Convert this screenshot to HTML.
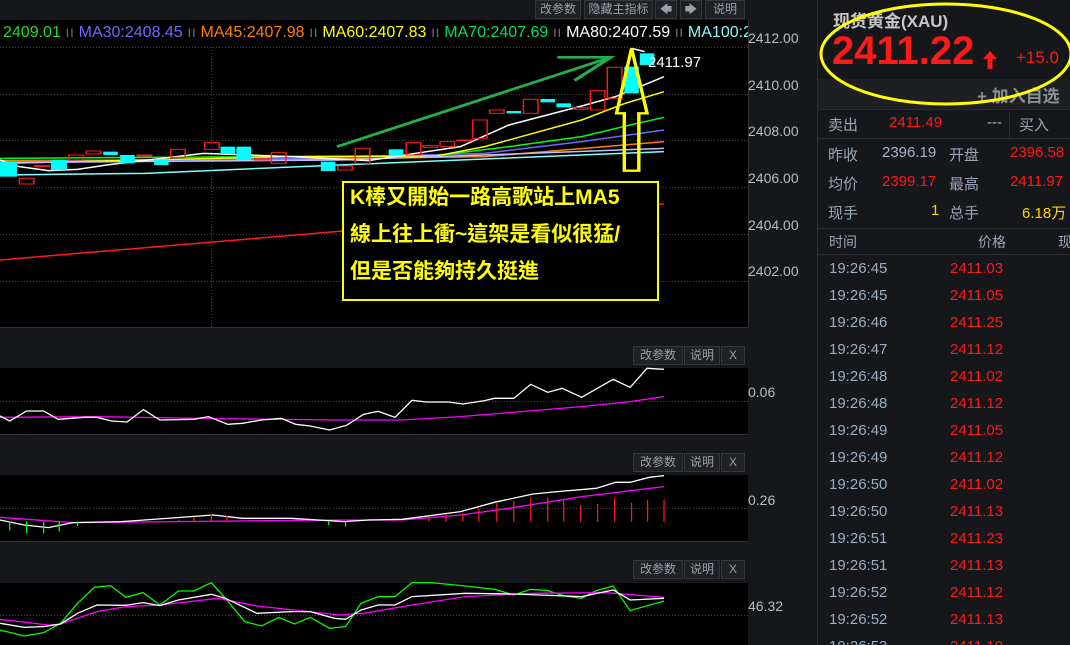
<!DOCTYPE html>
<html style="height:645px;overflow:hidden"><head><meta charset="utf-8"><style>
*{margin:0;padding:0;box-sizing:border-box}
body{width:1070px;height:645px;background:#16171b;overflow:hidden;position:relative;font-family:"Liberation Sans","Noto Sans CJK SC",sans-serif}
.a{position:absolute;white-space:nowrap}
.btn{position:absolute;background:#1f2125;border:1px solid #33363b;color:#9aa0a8;font-size:12px;text-align:center;line-height:17px;height:19px}
.ax{position:absolute;left:748px;font-size:14px;color:#b8bcc2}
.r{color:#ff1a1a}
.g{color:#a8b6c8}
.lb{color:#9aa6b6;font-size:15px}
</style></head><body>
<div class="a" style="left:0;top:20px;width:748px;height:308px;background:#000;border-bottom:1px solid #333"></div>
<div class="a" style="left:0;top:368px;width:748px;height:67px;background:#000;border-bottom:1px solid #333"></div>
<div class="a" style="left:0;top:475px;width:748px;height:67px;background:#000;border-bottom:1px solid #333"></div>
<div class="a" style="left:0;top:583px;width:748px;height:62px;background:#000"></div>
<div class="a" style="left:748px;top:20px;width:1px;height:308px;background:#333"></div>
<svg class="a" style="left:0;top:0" width="748" height="645">
<g stroke="#444" stroke-dasharray="1,2" stroke-width="1">
<line x1="0" y1="47.5" x2="748" y2="47.5"/><line x1="0" y1="94.5" x2="748" y2="94.5"/><line x1="0" y1="140.5" x2="748" y2="140.5"/><line x1="0" y1="187.5" x2="748" y2="187.5"/><line x1="0" y1="234.5" x2="748" y2="234.5"/><line x1="0" y1="281.5" x2="748" y2="281.5"/>
<line x1="211.5" y1="47" x2="211.5" y2="328"/>
<line x1="0" y1="401.5" x2="748" y2="401.5"/><line x1="0" y1="508.5" x2="748" y2="508.5"/><line x1="0" y1="615.5" x2="748" y2="615.5"/>
</g>
<g transform="scale(0.4847,0.3333)" fill="none" stroke-width="1.5">
<polyline vector-effect="non-scaling-stroke" stroke="#ff1a1a" points="0,780 1370,612"/>
<polyline vector-effect="non-scaling-stroke" stroke="#7fffff" points="0,525 300,520 700,495 1370,455"/>
<polyline vector-effect="non-scaling-stroke" stroke="#ff8000" points="0,482 600,478 1000,470 1370,425"/>
<polyline vector-effect="non-scaling-stroke" stroke="#6a6aff" points="0,486 600,476 1000,460 1200,425 1370,390"/>
<polyline vector-effect="non-scaling-stroke" stroke="#00ff00" points="0,475 900,467 1050,440 1200,410 1300,375 1370,352"/>
<polyline vector-effect="non-scaling-stroke" stroke="#ffff00" points="0,490 600,470 900,468 1000,440 1100,400 1200,360 1290,310 1370,275"/>
<polyline vector-effect="non-scaling-stroke" stroke="#c0c0ff" points="0,488 700,480 1000,465 1370,445"/>
<polyline vector-effect="non-scaling-stroke" stroke="#fff" points="0,480 40,500 100,512 160,508 220,495 420,460 600,470 760,482 830,466 950,440 1050,375 1200,318 1270,290 1370,230"/>
<polyline vector-effect="non-scaling-stroke" stroke="#fff" points="1303,145 1330,155"/>
<g fill="#00ffff">
<rect x="0" y="485" width="35" height="45"/><rect x="105" y="480" width="33" height="30"/><rect x="213" y="455" width="30" height="10"/><rect x="248" y="465" width="30" height="25"/><rect x="318" y="478" width="30" height="17"/><rect x="455" y="440" width="30" height="22"/><rect x="488" y="440" width="30" height="40"/><rect x="662" y="485" width="30" height="28"/><rect x="802" y="448" width="30" height="17"/><rect x="1045" y="333" width="30" height="7"/><rect x="1115" y="297" width="30" height="10"/><rect x="1148" y="310" width="30" height="12"/><rect x="1288" y="200" width="30" height="80"/><rect x="1320" y="160" width="30" height="35"/>
</g>
<g stroke="#ff1a1a" fill="none" stroke-width="3">
<rect x="40" y="535" width="30" height="17"/><rect x="72" y="497" width="30" height="3"/><rect x="142" y="465" width="30" height="15"/><rect x="178" y="453" width="30" height="9"/><rect x="283" y="465" width="30" height="3"/><rect x="352" y="448" width="30" height="24"/><rect x="422" y="428" width="30" height="20"/><rect x="525" y="475" width="30" height="5"/><rect x="560" y="458" width="30" height="32"/><rect x="697" y="498" width="30" height="12"/><rect x="733" y="445" width="30" height="45"/><rect x="838" y="428" width="30" height="37"/><rect x="873" y="437" width="30" height="5"/><rect x="908" y="425" width="30" height="15"/><rect x="943" y="420" width="30" height="2"/><rect x="975" y="360" width="30" height="55"/><rect x="1010" y="330" width="30" height="10"/><rect x="1080" y="298" width="30" height="42"/><rect x="1183" y="323" width="30" height="5"/><rect x="1218" y="272" width="30" height="58"/><rect x="1253" y="202" width="30" height="93"/>
</g>
<polyline stroke="#22b04a" stroke-width="8" points="695,440 1260,172"/>
<polyline stroke="#22b04a" stroke-width="8" points="1150,172 1260,172 1185,242"/>
<polygon stroke="#ffff00" stroke-width="7" points="1303,145 1335,340 1318,340 1318,512 1288,512 1288,340 1272,340"/>
</g>
<g transform="translate(0,340) scale(0.4847,0.3333)" fill="none" stroke-width="1.3">
<polyline vector-effect="non-scaling-stroke" stroke="#ff00ff" points="0,232 200,230 450,236 700,240 830,240 950,230 1050,218 1200,200 1300,185 1370,170"/>
<polyline vector-effect="non-scaling-stroke" stroke="#fff" points="0,228 20,243 55,213 90,213 120,238 175,232 200,232 230,243 262,246 296,209 330,240 400,238 430,230 470,253 500,250 540,240 580,235 610,253 640,258 680,270 715,256 750,223 780,214 815,232 850,181 880,186 925,186 955,192 1000,182 1020,175 1060,175 1095,133 1130,157 1160,145 1200,172 1265,118 1300,142 1335,85 1370,88"/>
<polyline vector-effect="non-scaling-stroke" stroke="#ff00ff" points="0,532 150,548 700,540 830,540 950,525 1050,505 1200,470 1370,440"/>
<polyline vector-effect="non-scaling-stroke" stroke="#fff" points="0,540 50,555 100,563 150,548 250,545 440,525 500,535 600,535 710,545 760,540 830,538 950,515 1020,487 1100,462 1150,455 1230,445 1270,427 1300,427 1340,412 1370,407"/>
<g stroke="#ff1a1a"><line vector-effect="non-scaling-stroke" x1="370" y1="545" x2="370" y2="538"/><line vector-effect="non-scaling-stroke" x1="400" y1="545" x2="400" y2="532"/><line vector-effect="non-scaling-stroke" x1="436" y1="545" x2="436" y2="522"/><line vector-effect="non-scaling-stroke" x1="468" y1="545" x2="468" y2="528"/><line vector-effect="non-scaling-stroke" x1="885" y1="545" x2="885" y2="530"/><line vector-effect="non-scaling-stroke" x1="920" y1="545" x2="920" y2="522"/><line vector-effect="non-scaling-stroke" x1="955" y1="545" x2="955" y2="520"/><line vector-effect="non-scaling-stroke" x1="988" y1="545" x2="988" y2="505"/><line vector-effect="non-scaling-stroke" x1="1025" y1="545" x2="1025" y2="490"/><line vector-effect="non-scaling-stroke" x1="1060" y1="545" x2="1060" y2="483"/><line vector-effect="non-scaling-stroke" x1="1095" y1="545" x2="1095" y2="473"/><line vector-effect="non-scaling-stroke" x1="1130" y1="545" x2="1130" y2="473"/><line vector-effect="non-scaling-stroke" x1="1163" y1="545" x2="1163" y2="480"/><line vector-effect="non-scaling-stroke" x1="1198" y1="545" x2="1198" y2="495"/><line vector-effect="non-scaling-stroke" x1="1233" y1="545" x2="1233" y2="492"/><line vector-effect="non-scaling-stroke" x1="1268" y1="545" x2="1268" y2="473"/><line vector-effect="non-scaling-stroke" x1="1303" y1="545" x2="1303" y2="488"/><line vector-effect="non-scaling-stroke" x1="1336" y1="545" x2="1336" y2="480"/><line vector-effect="non-scaling-stroke" x1="1370" y1="545" x2="1370" y2="480"/></g>
<g stroke="#00ff00"><line vector-effect="non-scaling-stroke" x1="20" y1="545" x2="20" y2="572"/><line vector-effect="non-scaling-stroke" x1="55" y1="545" x2="55" y2="580"/><line vector-effect="non-scaling-stroke" x1="90" y1="545" x2="90" y2="580"/><line vector-effect="non-scaling-stroke" x1="122" y1="545" x2="122" y2="575"/><line vector-effect="non-scaling-stroke" x1="160" y1="545" x2="160" y2="558"/><line vector-effect="non-scaling-stroke" x1="713" y1="545" x2="713" y2="560"/><line vector-effect="non-scaling-stroke" x1="678" y1="545" x2="678" y2="556"/></g>
<polyline vector-effect="non-scaling-stroke" stroke="#00ff00" points="0,870 50,888 90,878 125,850 160,790 195,742 228,737 260,772 295,758 330,795 368,753 400,753 436,728 465,775 505,845 540,858 575,832 608,852 640,832 680,865 713,860 745,790 780,770 815,770 850,728 890,728 960,738 1020,748 1060,765 1095,748 1130,752 1165,768 1200,775 1230,752 1265,738 1300,812 1370,783"/>
<polyline vector-effect="non-scaling-stroke" stroke="#ff00ff" points="0,838 100,855 125,852 200,815 260,800 330,795 450,775 530,798 700,825 750,820 850,795 960,770 1100,760 1250,758 1370,772"/>
<polyline vector-effect="non-scaling-stroke" stroke="#fff" points="0,850 50,862 90,860 125,852 160,820 200,795 260,796 295,788 330,797 368,780 436,763 465,775 530,820 600,815 640,815 690,835 713,838 745,810 780,795 815,795 850,770 960,760 1060,762 1200,770 1265,750 1300,780 1370,775"/>
</g>
</svg>
<div class="a" style="left:3px;top:24px;font-size:16px;width:745px;overflow:hidden"><span style="color:#22dd22">2409.01</span><span style="color:#666"> ıı </span><span style="color:#6a6aff">MA30:2408.45</span><span style="color:#666"> ıı </span><span style="color:#ff8000">MA45:2407.98</span><span style="color:#666"> ıı </span><span style="color:#ffff00">MA60:2407.83</span><span style="color:#666"> ıı </span><span style="color:#00dd66">MA70:2407.69</span><span style="color:#666"> ıı </span><span style="color:#fff">MA80:2407.59</span><span style="color:#666"> ıı </span><span style="color:#7fffff">MA100:2</span></div>
<div class="a" style="left:648px;top:54px;font-size:15px;color:#fff">2411.97</div>
<div class="a" style="left:342px;top:181px;width:317px;height:120px;border:2px solid #ffff00;background:#000;color:#ffff00;font-size:21px;line-height:37px;padding:0 0 0 6px;font-weight:bold;font-family:'Liberation Sans','Noto Sans CJK TC',sans-serif"><div style="margin-top:-4px">K棒又開始一路高歌站上MA5<br>線上往上衝~這架是看似很猛/<br>但是否能夠持久挺進</div></div>
<div class="btn" style="left:535px;top:0;width:46px">改参数</div>
<div class="btn" style="left:584px;top:0;width:69px">隐藏主指标</div>
<div class="btn" style="left:655px;top:0;width:22px">🡄</div>
<div class="btn" style="left:680px;top:0;width:22px">🡆</div>
<div class="btn" style="left:705px;top:0;width:40px">说明</div>
<div class="btn" style="left:633px;top:346px;width:50px">改参数</div><div class="btn" style="left:684px;top:346px;width:36px">说明</div><div class="btn" style="left:721px;top:346px;width:24px">X</div>
<div class="btn" style="left:633px;top:453px;width:50px">改参数</div><div class="btn" style="left:684px;top:453px;width:36px">说明</div><div class="btn" style="left:721px;top:453px;width:24px">X</div>
<div class="btn" style="left:633px;top:560px;width:50px">改参数</div><div class="btn" style="left:684px;top:560px;width:36px">说明</div><div class="btn" style="left:721px;top:560px;width:24px">X</div>
<div class="ax" style="top:30px">2412.00</div><div class="ax" style="top:77px">2410.00</div><div class="ax" style="top:123px">2408.00</div><div class="ax" style="top:170px">2406.00</div><div class="ax" style="top:217px">2404.00</div><div class="ax" style="top:263px">2402.00</div>
<div class="ax" style="top:384px">0.06</div><div class="ax" style="top:492px">0.26</div><div class="ax" style="top:598px">46.32</div>
<div class="a" style="left:817px;top:0;width:1px;height:645px;background:#2a2c30"></div>
<div class="a" style="left:833px;top:7px;font-size:17px;font-weight:bold;color:#c8c8c8">现货黄金(XAU)</div>
<div class="a r" style="left:832px;top:29px;font-size:40px;font-weight:bold">2411.22</div>
<svg class="a" style="left:982px;top:50px" width="16" height="20"><path d="M8 1 L15 9 L10.5 9 L10.5 19 L5.5 19 L5.5 9 L1 9 Z" fill="#ff1a1a"/></svg>
<div class="a r" style="left:1016px;top:48px;font-size:17px">+15.0</div>
<div class="a" style="left:818px;top:79px;width:252px;height:31px;background:#1e1f23;border-bottom:1px solid #2a2c30"></div>
<div class="a" style="left:977px;top:82px;font-size:17px;color:#8a8e95;font-weight:bold">+ 加入自选</div>
<div class="a" style="left:818px;top:138px;width:252px;height:1px;background:#2a2c30"></div>
<div class="a" style="left:1009px;top:111px;width:1px;height:27px;background:#2a2c30"></div>
<div class="a lb" style="left:828px;top:114px">卖出</div><div class="a r" style="left:889px;top:114px;font-size:15px">2411.49</div><div class="a g" style="left:987px;top:114px;font-size:15px">---</div><div class="a lb" style="left:1019px;top:114px">买入</div>
<div class="a lb" style="left:828px;top:144px">昨收</div><div class="a g" style="left:882px;top:144px;font-size:15px">2396.19</div><div class="a lb" style="left:949px;top:144px">开盘</div><div class="a r" style="left:1010px;top:144px;font-size:15px">2396.58</div>
<div class="a lb" style="left:828px;top:173px">均价</div><div class="a r" style="left:882px;top:173px;font-size:15px">2399.17</div><div class="a lb" style="left:949px;top:173px">最高</div><div class="a r" style="left:1010px;top:173px;font-size:15px">2411.97</div>
<div class="a lb" style="left:828px;top:202px">现手</div><div class="a" style="left:931px;top:202px;font-size:15px;color:#ffd700">1</div><div class="a lb" style="left:949px;top:202px">总手</div><div class="a" style="left:1022px;top:202px;font-size:15px;color:#ffd700">6.18万</div>
<div class="a" style="left:818px;top:228px;width:252px;height:1px;background:#2a2c30"></div>
<div class="a lb" style="left:829px;top:232px;font-size:14px">时间</div><div class="a lb" style="left:978px;top:232px;font-size:14px">价格</div><div class="a lb" style="left:1058px;top:232px;font-size:14px">现</div>
<div class="a" style="left:818px;top:254px;width:252px;height:1px;background:#2a2c30"></div>
<div class="a" style="left:829px;top:255px;font-size:15px;line-height:27px;color:#9aaec6">19:26:45<br>19:26:45<br>19:26:46<br>19:26:47<br>19:26:48<br>19:26:48<br>19:26:49<br>19:26:49<br>19:26:50<br>19:26:50<br>19:26:51<br>19:26:51<br>19:26:52<br>19:26:52<br>19:26:53</div>
<div class="a r" style="left:950px;top:255px;font-size:15px;line-height:27px">2411.03<br>2411.05<br>2411.25<br>2411.12<br>2411.02<br>2411.12<br>2411.05<br>2411.12<br>2411.02<br>2411.13<br>2411.23<br>2411.13<br>2411.12<br>2411.13<br>2411.10</div>
<svg class="a" style="left:815px;top:2px" width="255" height="106"><ellipse cx="131" cy="52" rx="125" ry="50" fill="none" stroke="#ffff00" stroke-width="3"/></svg>
</body></html>
